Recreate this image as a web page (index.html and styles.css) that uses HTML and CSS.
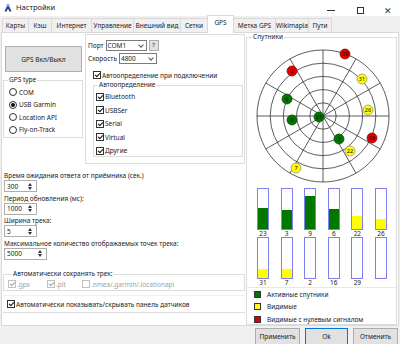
FILE: index.html
```html
<!DOCTYPE html>
<html lang="ru">
<head>
<meta charset="utf-8">
<title>Настройки</title>
<link rel="stylesheet" href="styles.css">
</head>
<body>
<div class="win">
  <div class="titlebar">
    <svg class="appicon" width="8" height="9" viewBox="0 0 8 9"><path d="M4 0.5 L7.5 8.5 L5.5 8.5 L4 5.5 L2.5 8.5 L0.5 8.5 Z" fill="#1f3f8f"/><circle cx="4" cy="2.6" r="1.4" fill="#6fa0e0"/></svg>
    <span class="title">Настройки</span>
    <div class="ctrls">
      <span class="c-min"></span>
      <span class="c-max"></span>
      <span class="c-close">✕</span>
    </div>
  </div>
  <div class="tabs">
    <div class="tab">Карты</div>
    <div class="tab">Кэш</div>
    <div class="tab">Интернет</div>
    <div class="tab">Управление</div>
    <div class="tab">Внешний вид</div>
    <div class="tab">Сетки</div>
    <div class="tab active">GPS</div>
    <div class="tab">Метка GPS</div>
    <div class="tab">Wikimapia</div>
    <div class="tab">Пути</div>
  </div>
  <div class="page">
    <div class="leftcol">
      <div class="toprow">
        <div class="colA">
          <div class="bigbtn">GPS Вкл/Выкл</div>
          <fieldset class="grp gpstype">
            <legend>GPS type</legend>
            <div class="radio"><span class="rb"></span>COM</div>
            <div class="radio"><span class="rb on"></span>USB Garmin</div>
            <div class="radio"><span class="rb"></span>Location API</div>
            <div class="radio"><span class="rb"></span>Fly-on-Track</div>
          </fieldset>
        </div>
        <div class="portbox">
          <div class="frow r1">
            <span class="lbl">Порт</span>
            <span class="combo w40">COM1<span class="chev"></span></span>
            <span class="qbtn">?</span>
          </div>
          <div class="frow r2">
            <span class="lbl">Скорость</span>
            <span class="combo w38">4800<span class="chev"></span></span>
          </div>
          <div class="chk autoconn"><span class="cb on"></span>Автоопределение при подключении</div>
          <fieldset class="grp autodet">
            <legend>Автоопределение</legend>
            <div class="chk"><span class="cb on"></span>Bluetooth</div>
            <div class="chk"><span class="cb on"></span>USBSer</div>
            <div class="chk"><span class="cb on"></span>Serial</div>
            <div class="chk"><span class="cb on"></span>Virtual</div>
            <div class="chk"><span class="cb on"></span>Другие</div>
          </fieldset>
        </div>
      </div>
      <div class="fields">
        <div class="flbl">Время ожидания ответа от приёмника (сек.)</div>
        <div class="spin">300<span class="arr"></span></div>
        <div class="flbl">Период обновления (мс):</div>
        <div class="spin">1000<span class="arr"></span></div>
        <div class="flbl">Ширина трека:</div>
        <div class="spin">5<span class="arr"></span></div>
        <div class="flbl">Максимальное количество отображаемых точек трека:</div>
        <div class="spin wide">5000<span class="arr"></span></div>
      </div>
      <fieldset class="grp autosave">
        <legend>Автоматически сохранять трек:</legend>
        <div class="saverow">
          <div class="chk dis s1"><span class="cb on"></span>.gpx</div>
          <div class="chk dis s2"><span class="cb on"></span>.plt</div>
          <div class="chk dis"><span class="cb"></span>.nmea/.garmin/.locationapi</div>
        </div>
      </fieldset>
      <div class="sensorbox">
        <div class="chk"><span class="cb on"></span>Автоматически показывать/скрывать панель датчиков</div>
      </div>
    </div>
    <fieldset class="grp sats">
      <legend>Спутники</legend>
      <svg class="sky" width="149" height="145" viewBox="0 0 149 145">
        <g fill="none" stroke="#333" stroke-width="0.8">
          <circle cx="76" cy="76" r="66"/>
          <circle cx="76" cy="76" r="52.8"/>
          <circle cx="76" cy="76" r="39.6"/>
          <circle cx="76" cy="76" r="26.4"/>
          <circle cx="76" cy="76" r="13.2"/>
          <line x1="76" y1="10" x2="76" y2="142"/>
          <line x1="10" y1="76" x2="142" y2="76"/>
          <line x1="43" y1="18.8" x2="109" y2="133.2"/>
          <line x1="109" y1="18.8" x2="43" y2="133.2"/>
          <line x1="18.8" y1="43" x2="133.2" y2="109"/>
          <line x1="133.2" y1="43" x2="18.8" y2="109"/>
        </g>
        <g stroke-width="0.7" font-family="Noto Sans, sans-serif" font-size="5.5" text-anchor="middle">
          <circle cx="98" cy="14" r="5" fill="#e00000" stroke="#800"/><text x="98" y="16">29</text>
          <circle cx="45" cy="31" r="5" fill="#e00000" stroke="#800"/><text x="45" y="33">2</text>
          <circle cx="125" cy="98" r="5" fill="#e00000" stroke="#800"/><text x="125" y="100">16</text>
          <circle cx="115" cy="39" r="5" fill="#ffff00" stroke="#888"/><text x="115" y="41">31</text>
          <circle cx="121" cy="70" r="5" fill="#ffff00" stroke="#888"/><text x="121" y="72">26</text>
          <circle cx="103" cy="111" r="5" fill="#ffff00" stroke="#888"/><text x="103" y="113">22</text>
          <circle cx="49" cy="128" r="5" fill="#ffff00" stroke="#888"/><text x="49" y="130">7</text>
          <circle cx="40" cy="59" r="5" fill="#007800" stroke="#040"/><text x="40" y="61">6</text>
          <circle cx="45" cy="80" r="5" fill="#007800" stroke="#040"/><text x="45" y="82">9</text>
          <circle cx="72" cy="77" r="5" fill="#007800" stroke="#040"/><text x="72" y="79">23</text>
          <circle cx="92" cy="99" r="5" fill="#007800" stroke="#040"/><text x="92" y="101">3</text>
        </g>
      </svg>
      <div class="bars first">
        <div class="bitem"><div class="bar"><div class="fill g" style="height:21px"></div></div><span>23</span></div>
        <div class="bitem"><div class="bar"><div class="fill g" style="height:19px"></div></div><span>3</span></div>
        <div class="bitem"><div class="bar"><div class="fill g" style="height:33px"></div></div><span>9</span></div>
        <div class="bitem"><div class="bar"><div class="fill g" style="height:20px"></div></div><span>6</span></div>
        <div class="bitem"><div class="bar"><div class="fill y" style="height:13px"></div></div><span>22</span></div>
        <div class="bitem"><div class="bar"><div class="fill y" style="height:10px"></div></div><span>26</span></div>
      </div>
      <div class="bars">
        <div class="bitem"><div class="bar"><div class="fill y" style="height:9px"></div></div><span>31</span></div>
        <div class="bitem"><div class="bar"><div class="fill y" style="height:9px"></div></div><span>7</span></div>
        <div class="bitem"><div class="bar"></div><span>2</span></div>
        <div class="bitem"><div class="bar"></div><span>16</span></div>
        <div class="bitem"><div class="bar"></div><span>29</span></div>
        <div class="bitem"><div class="bar"></div><span></span></div>
      </div>
      <div class="legend">
        <div class="lrow"><span class="sq g"></span>Активные спутники</div>
        <div class="lrow"><span class="sq y"></span>Видимые</div>
        <div class="lrow"><span class="sq r"></span>Видимые с нулевым сигналом</div>
      </div>
    </fieldset>
  </div>
  <div class="footer">
    <div class="btn">Применить</div>
    <div class="btn def">Ok</div>
    <div class="btn">Отменить</div>
  </div>
</div>
</body>
</html>
```

FILE: styles.css
```css
* { box-sizing: border-box; }
html, body { margin: 0; padding: 0; }
body {
  font-family: "Noto Sans", "Open Sans", sans-serif;
  font-size: 6.5px;
  color: #1a1a1a;
  background: #f0f0f0;
}
.win {
  width: 400px;
  height: 344px;
  background: #f0f0f0;
  overflow: hidden;
  display: flex;
  flex-direction: column;
}
.titlebar {
  height: 16px;
  background: #fff;
  display: flex;
  align-items: center;
  padding-left: 4px;
  font-size: 7.5px;
}
.appicon { margin-right: 4px; margin-top: -2px; }
.title { margin-top: -2px; }
.ctrls {
  margin-left: auto;
  display: flex;
  align-items: center;
  height: 16px;
  padding-top: 4px;
}
.c-min { width: 8px; height: 1px; background: #333; margin-right: 22px; }
.c-max { width: 7px; height: 7px; border: 1px solid #333; margin-right: 20px; }
.c-close { font-size: 9px; color: #333; margin-right: 8px; line-height: 1; }

.tabs {
  display: flex;
  height: 16px;
  padding-left: 2px;
  padding-top: 2px;
  position: relative;
  z-index: 2;
}
.tab {
  height: 14px;
  line-height: 13px;
  border: 1px solid #d9d9d9;
  border-bottom: none;
  margin-left: -1px;
  background: #f0f0f0;
  text-align: center;
  white-space: nowrap;
  overflow: hidden;
}
.tab:first-child { margin-left: 0; }
.tab:nth-child(1) { width: 27px; }
.tab:nth-child(2) { width: 24px; }
.tab:nth-child(3) { width: 41px; }
.tab:nth-child(4) { width: 43px; }
.tab:nth-child(5) { width: 48px; }
.tab:nth-child(6) { width: 28px; }
.tab:nth-child(7) { width: 27px; }
.tab:nth-child(8) { width: 43px; }
.tab:nth-child(9) { width: 34px; }
.tab:nth-child(10) { width: 24px; }
.tab.active {
  background: #fff;
  height: 18px;
  margin-top: -3px;
  line-height: 14px;
  position: relative;
  z-index: 3;
}

.page {
  height: 295px;
  margin: 0 1px;
  background: #fff;
  border: 1px solid #d9d9d9;
  display: flex;
  padding: 0 1px;
  gap: 1px;
}
.leftcol {
  width: 242px;
  display: flex;
  flex-direction: column;
}
.toprow {
  display: flex;
  height: 130px;
  margin-top: 1px;
}
.colA { width: 80px; }
.bigbtn {
  margin: 12px 0 0 2px;
  width: 77px;
  height: 26px;
  background: #e1e1e1;
  border: 1px solid #adadad;
  display: flex;
  align-items: center;
  justify-content: center;
}
fieldset.grp {
  border: 1px solid #dcdcdc;
  margin: 0;
  padding: 0;
  min-width: 0;
}
fieldset.grp legend {
  padding: 0 1px;
  margin-left: 4px;
  line-height: 8px;
}
.gpstype {
  margin-top: 4px !important;
  height: 62px;
  padding-top: 2px !important;
}
.radio {
  display: flex;
  align-items: center;
  height: 12.5px;
  padding-left: 5px;
}
.rb {
  width: 8px;
  height: 8px;
  border: 1px solid #333;
  border-radius: 50%;
  margin-right: 2px;
  display: flex;
  align-items: center;
  justify-content: center;
  background: #fff;
}
.rb.on::after {
  content: "";
  width: 4px;
  height: 4px;
  border-radius: 50%;
  background: #111;
}
.portbox {
  margin-left: 2px;
  width: 160px;
  height: 130px;
  border: 1px solid #dcdcdc;
  padding: 4px 0 0 2px;
}
.frow {
  display: flex;
  align-items: center;
  height: 12px;
}
.frow.r2 { margin-top: 1px; }
.lbl { margin-right: 2px; }
.combo {
  height: 11px;
  border: 1px solid #7a7a7a;
  background: #fff;
  display: flex;
  align-items: center;
  padding-left: 1px;
  position: relative;
}
.combo.w40 { width: 41px; }
.combo.w38 { width: 38px; }
.chev {
  position: absolute;
  right: 3px;
  top: 2px;
  width: 4px;
  height: 4px;
  border-right: 1px solid #555;
  border-bottom: 1px solid #555;
  transform: rotate(45deg);
}
.qbtn {
  width: 10px;
  height: 11px;
  margin-left: 2px;
  background: #e1e1e1;
  border: 1px solid #adadad;
  display: flex;
  align-items: center;
  justify-content: center;
  font-size: 6px;
}
.chk {
  display: flex;
  align-items: center;
  white-space: nowrap;
}
.cb {
  width: 8px;
  height: 8px;
  border: 1px solid #333;
  margin-right: 1px;
  position: relative;
  background: #fff;
  flex: none;
}
.cb.on::after {
  content: "";
  position: absolute;
  left: 2px;
  top: 0px;
  width: 2px;
  height: 4px;
  border-right: 1px solid #111;
  border-bottom: 1px solid #111;
  transform: rotate(45deg);
}
.autoconn { height: 12px; margin-top: 5px; padding-left: 5px; }
.autodet {
  margin: 0 1px 0 5px !important;
  height: 76px;
  padding-top: 1px !important;
}
.autodet .chk { height: 13.5px; padding-left: 2px; }

.fields { margin-top: 7px; padding-left: 1px; }
.flbl { line-height: 9px; height: 9px; }
.spin {
  width: 33px;
  height: 12px;
  border: 1px solid #adadad;
  display: flex;
  align-items: center;
  padding-left: 2px;
  position: relative;
  margin-bottom: 1.5px;
}
.spin.wide { width: 43px; }
.arr {
  position: absolute;
  right: 3px;
  top: 1.5px;
  width: 5px;
  height: 7px;
}
.arr::before, .arr::after {
  content: "";
  position: absolute;
  left: 0;
  border-left: 2.5px solid transparent;
  border-right: 2.5px solid transparent;
}
.arr::before { top: 0; border-bottom: 3px solid #333; }
.arr::after { bottom: 0; border-top: 3px solid #333; }

.autosave {
  margin-top: 9px !important;
  height: 21px;
  padding-left: 4px !important;
}
.saverow { display: flex; align-items: center; height: 12px; }
.chk.dis { color: #a0a0a0; }
.chk.dis .cb { border-color: #c0c0c0; }
.chk.dis .cb.on::after { border-color: #a0a0a0; }
.s1 { width: 39px; }
.s2 { width: 35px; }
.sensorbox {
  margin-top: 4px;
  height: 18px;
  border-bottom: 1px solid #dcdcdc;
  border-top: 1px solid #f0f0f0;
  display: flex;
  align-items: center;
  padding-left: 4px;
}

.sats {
  width: 151px;
  height: 292px;
  margin-top: 0 !important;
}
.sats legend { margin-left: 5px !important; }
.sky { display: block; margin-top: -1px; }
.bars {
  display: flex;
  gap: 11.6px;
  padding-left: 10px;
}
.bars.first { margin-top: 3px; }
.bitem {
  width: 12px;
  display: flex;
  flex-direction: column;
  align-items: center;
}
.bar {
  width: 12px;
  height: 42px;
  border: 1px solid #7f7ff0;
  display: flex;
  flex-direction: column;
  justify-content: flex-end;
  background: #fff;
}
.fill { width: 100%; }
.fill.g { background: #007800; }
.fill.y { background: #ffff00; }
.bitem span { height: 7px; line-height: 7px; font-size: 6.5px; }
.legend {
  margin-top: 1px;
  border-top: 1px solid #e8e8e8;
}
.lrow {
  display: flex;
  align-items: center;
  height: 12.5px;
  padding-left: 7px;
}
.sq {
  width: 7px;
  height: 7px;
  border: 1px solid #333;
  margin-right: 6px;
}
.sq.g { background: #007800; }
.sq.y { background: #ffff00; }
.sq.r { background: #e00000; }

.footer {
  display: flex;
  justify-content: flex-end;
  gap: 5px;
  padding: 2px 2px 0 0;
}
.btn {
  width: 45px;
  height: 17px;
  background: #e1e1e1;
  border: 1px solid #adadad;
  display: flex;
  align-items: center;
  justify-content: center;
}
.btn.def { border: 1px solid #0078d7; width: 43px; }
```
